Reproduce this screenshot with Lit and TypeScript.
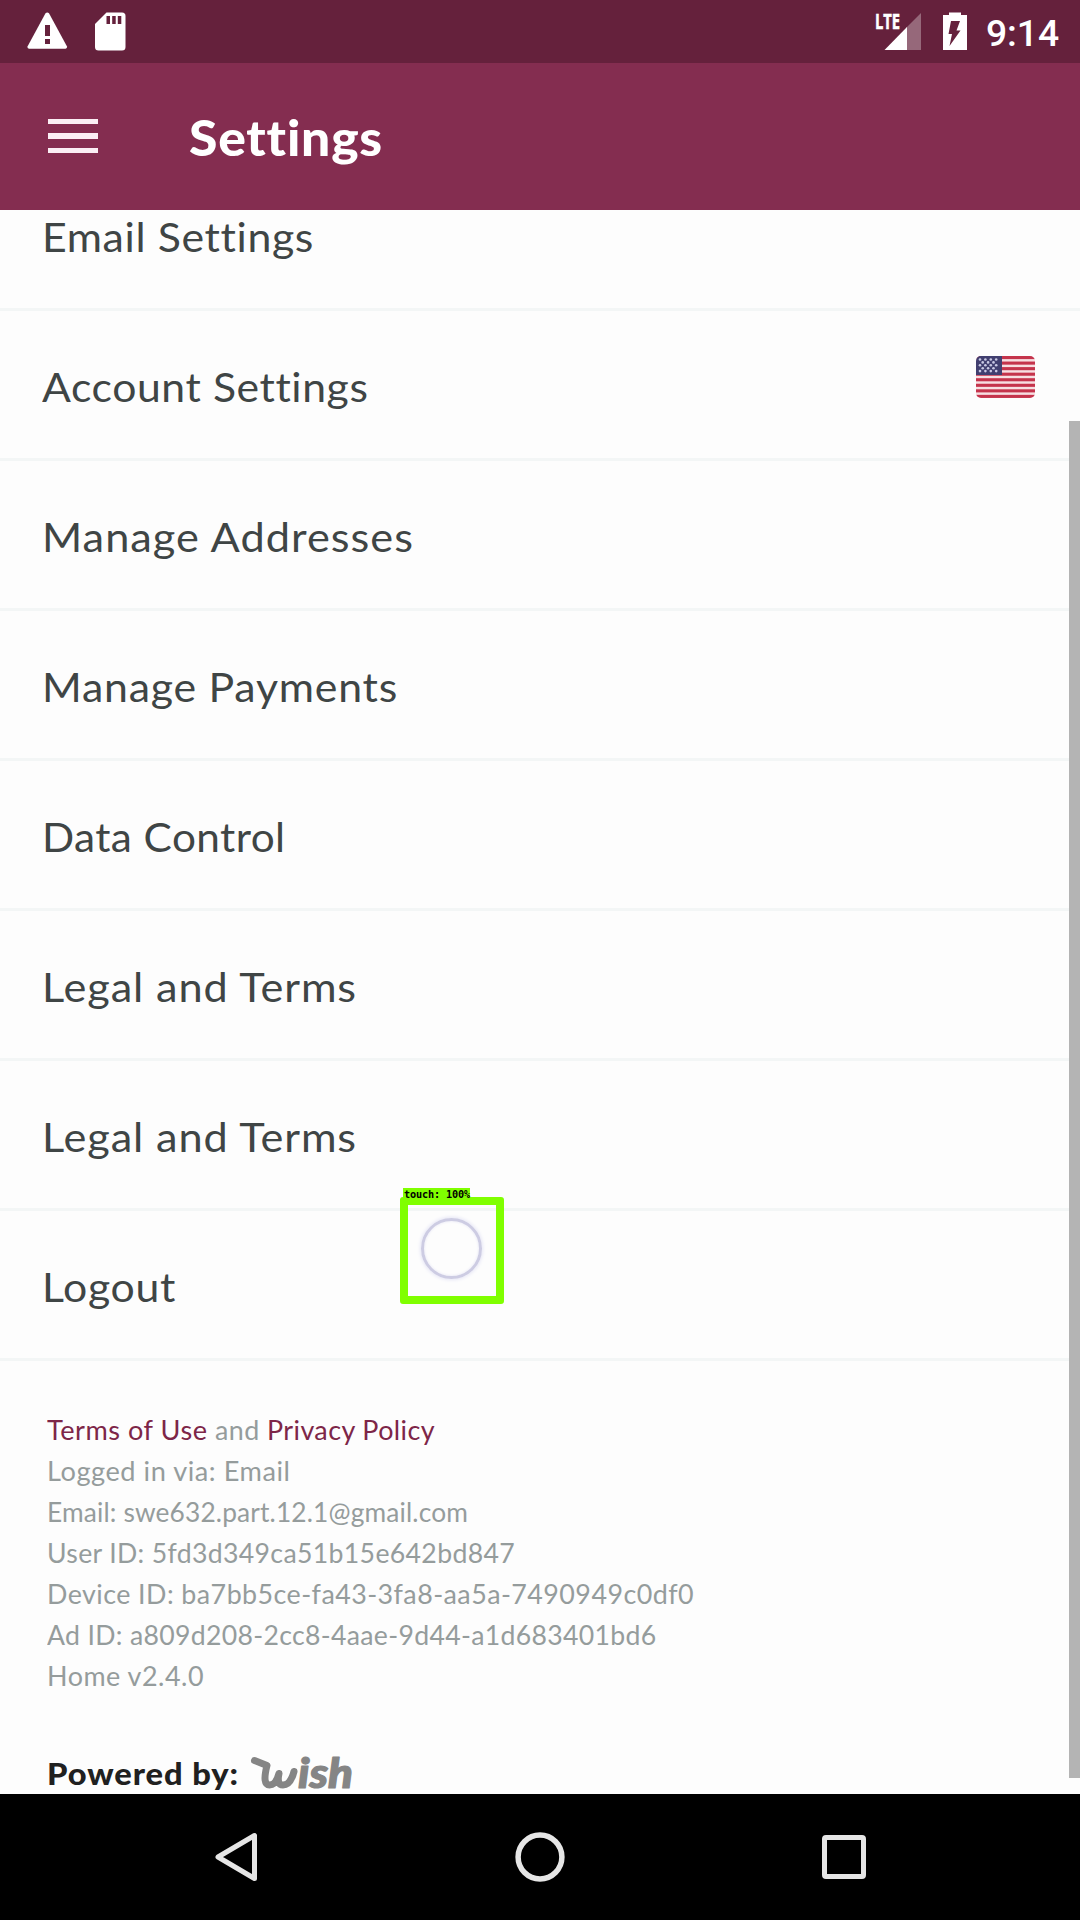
import { LitElement, html, css, svg } from "lit";
import { customElement, property } from "lit/decorators.js";

/** One line of text fitted to a set width, half by tracking and half by glyph width. */
@customElement("fit-text")
class FitText extends LitElement {
  @property({ type: Number }) span = 0;
  static styles = css`
    :host { display: inline-block; white-space: pre; font-variant-ligatures: none; }
    .run { display: inline-block; transform-origin: 0 50%; }
  `;
  render() {
    return html`<span class="run"><slot></slot></span>`;
  }
  async firstUpdated() {
    await document.fonts.ready;
    const run = this.renderRoot.querySelector(".run") as HTMLElement;
    const natural = run.getBoundingClientRect().width;
    const count = (this.textContent ?? "").length;
    if (natural && count && this.span) {
      const tracked = (natural + this.span) / 2;
      run.style.letterSpacing = `${(tracked - natural) / count}px`;
      run.style.transform = `scaleX(${this.span / tracked})`;
      this.style.width = `${this.span}px`;
    }
  }
}

@customElement("status-bar")
class StatusBar extends LitElement {
  static styles = css`
    :host {
      display: flex; align-items: center; height: 63px; box-sizing: border-box;
      padding: 0 21px 0 26px; background: #65213c; color: #fff;
      font-family: Roboto, sans-serif;
    }
    svg { display: block; flex: none; }
    .sd { margin-left: 25px; }
    .signal { margin-left: auto; }
    .battery { margin-left: 20px; }
    .lte { font: 700 22px "Open Sans", Roboto, sans-serif; }
    .clock { margin-left: 18px; font-size: 37.5px; font-weight: 500; line-height: 63px; padding-top: 3px; }
  `;
  render() {
    return html`
      <svg width="43" height="63" viewBox="26 0 43 63">
        <path fill="#fff" d="M45.500 13.200q1.800-1.200 3.500 0L67 46.500q.4 2-1.500 2.200h-36.500q-2-.2-1.500-2.200z"/>
        <path fill="#65213c" d="M45 25h5v11h-5zM45 39h5v5h-5z"/>
      </svg>
      <svg class="sd" width="32" height="63" viewBox="94.500 0 32 63">
        <path fill="#fff" d="M107 12.500h15.500q3.500 0 3.500 3.500v31q0 3.500-3.500 3.500h-23.500q-3.500 0-3.500-3.500V24z"/>
        <path fill="#65213c" d="M107 16h3.500v8H107zM112.700 16h3.500v8h-3.500zM118.300 16h3.500v8h-3.500z"/>
      </svg>
      <svg class="signal" width="48" height="63" viewBox="874 0 48 63">
        <path fill="#fff" fill-opacity=".32" d="M921 13v37H906V28z"/>
        <path fill="#fff" d="M907 27v23H884.500z"/>
        <text class="lte" x="875" y="29" fill="#fff" stroke="#fff" stroke-width=".6" textLength="25" lengthAdjust="spacingAndGlyphs">LTE</text>
      </svg>
      <svg class="battery" width="26" height="63" viewBox="942 0 26 63">
        <path fill="#fff" d="M949 12.500h12V15h6v35h-24V15h6z"/>
        <path fill="#65213c" d="M951 21h9l-3.500 9.500h4L949.500 46l2.500-12h-3.500z"/>
      </svg>
      <fit-text class="clock" span="73">9:14</fit-text>
    `;
  }
}

@customElement("app-toolbar")
class AppToolbar extends LitElement {
  static styles = css`
    :host {
      display: flex; align-items: center; height: 147px; padding-left: 48px;
      box-sizing: border-box; background: #842d50; color: #fff;
      font: 900 50px/60px Lato, sans-serif;
    }
    .menu { display: flex; flex-direction: column; gap: 8.700px; width: 50px; margin-right: 90.5px; margin-top: -1px; }
    .bar { height: 5.700px; background: #fbeef4; }
    .title { padding-top: 1px; }
  `;
  render() {
    return html`
      <div class="menu"><div class="bar"></div><div class="bar"></div><div class="bar"></div></div>
      <fit-text class="title" span="194">Settings</fit-text>
    `;
  }
}

@customElement("us-flag")
class UsFlag extends LitElement {
  static styles = css`
    :host { display: block; }
    svg { display: block; border-radius: 5px; }
  `;
  render() {
    const stripes = [0, 1, 2, 3, 4, 5, 6, 7];
    const stars = [0, 1, 2, 3, 4].flatMap((r) =>
      (r % 2 ? [0, 1, 2] : [0, 1, 2, 3]).map((c) => ({ x: 4 + c * 5.4 + (r % 2 ? 2.7 : 0), y: 3.5 + r * 2.9 })));
    return html`<svg width="59" height="42" viewBox="0 0 59 42">
      <rect width="59" height="42" fill="#f7dfe2"/>
      ${stripes.map((i) => svg`<rect y=${i * 5.55} width="59" height="3.100" fill="#c5344c"/>`)}
      <rect width="26" height="19" fill="#413f70"/>
      ${stars.map((s) => svg`<circle cx=${s.x} cy=${s.y} r="1.300" fill="#c9c9e4"/>`)}
    </svg>`;
  }
}

@customElement("wish-logo")
class WishLogo extends LitElement {
  static styles = css`
    :host { display: block; }
    svg { display: block; overflow: visible; }
    .ish { font: italic 900 42px/1 Lato, sans-serif; }
  `;
  render() {
    return html`<svg width="106" height="36" viewBox="250 1755 106 36">
      <path fill="none" stroke="#858585" stroke-width="7" stroke-linecap="round" stroke-linejoin="round"
        d="M254.500 1760.500l12.500 5q-5 19.500 2.500 19.500q6.500 0 9.500-11.500q-2.500 11.500 4 11.500q7.500 0 11-13.500"/>
      <text class="ish" x="298" y="1788" fill="#858585" stroke="#858585" stroke-width="1.200" stroke-linejoin="round" textLength="55" lengthAdjust="spacingAndGlyphs">ish</text>
    </svg>`;
  }
}

@customElement("nav-bar")
class NavBar extends LitElement {
  static styles = css`
    :host { display: flex; justify-content: space-around; align-items: center; height: 126px;
      padding: 0 84px; box-sizing: border-box; background: #000; }
    svg { display: block; }
  `;
  render() {
    return html`
      <svg width="60" height="60" viewBox="0 0 60 60" fill="none" stroke="#e6e6e6" stroke-width="5" stroke-linejoin="round">
        <path d="M48.500 8.500v43L12 30z"/></svg>
      <svg width="60" height="60" viewBox="0 0 60 60" fill="none" stroke="#e6e6e6" stroke-width="5.500">
        <circle cx="30" cy="30" r="21.900"/></svg>
      <svg width="60" height="60" viewBox="0 0 60 60" fill="none" stroke="#e6e6e6" stroke-width="5">
        <rect x="10.500" y="10.500" width="39" height="39" rx="1.500"/></svg>
    `;
  }
}

interface Row { label: string; span: number; flag?: boolean; }

@customElement("app-root")
class AppRoot extends LitElement {
  static styles = css`
    :host {
      display: flex; flex-direction: column; position: relative; width: 1080px; height: 1920px;
      overflow: hidden; background: #fdfdfd; font-family: Lato, "Open Sans", sans-serif;
    }
    status-bar, app-toolbar, nav-bar { flex: none; z-index: 1; }
    .content { flex: 1; min-height: 0; overflow: hidden; }
    .list { margin-top: -49px; }
    .row {
      display: flex; justify-content: space-between; height: 150px; box-sizing: border-box;
      padding: 48px 45px 0 42px; border-bottom: 3px solid #f3f6f6;
      font-size: 41.5px; line-height: 54px; color: #3f4545;
    }
    .flag { margin-top: -3px; }
    .about { padding: 49px 0 0 47px; font-size: 26px; line-height: 41px; color: #959c9c; }
    .line { display: flex; }
    .link { color: #7d2648; }
    .powered { display: flex; align-items: flex-start; gap: 11px; margin-top: 53px; color: #202020;
      font-weight: 900; font-size: 31px; line-height: 44px; }
    .by { margin-top: 1px; }
    .logo { margin-top: 5px; }
    .scroll { position: absolute; right: 0; top: 421px; width: 11px; height: 1357px; background: #b4b4b4; }
    .touch { position: absolute; left: 400px; top: 1197px; width: 104px; height: 107px; }
    .box { position: absolute; left: 0; top: 0; width: 104px; height: 107px; box-sizing: border-box; border: 8px solid #80ff00; border-radius: 3px; }
    .ring { position: absolute; left: 21px; top: 21px; width: 61px; height: 61px; box-sizing: border-box;
      border: 3px solid #cdcce3; border-radius: 50%; box-shadow: 0 0 4px #d8d8f2, inset 0 0 3px #e4e4f5; }
    .tag { position: absolute; left: 3px; top: -9px; width: 67px; height: 14px; background: #80ff00; color: #000;
      font: 700 10.5px/13px "DejaVu Sans Mono", monospace; padding-left: 1px; box-sizing: border-box; }
  `;
  private rows: Row[] = [
    { label: "Email Settings", span: 272 },
    { label: "Account Settings", span: 326.5, flag: true },
    { label: "Manage Addresses", span: 372 },
    { label: "Manage Payments", span: 356 },
    { label: "Data Control", span: 243.5 },
    { label: "Legal and Terms", span: 315 },
    { label: "Legal and Terms", span: 315 },
    { label: "Logout", span: 134 },
  ];
  private details: Row[] = [
    { label: "Logged in via: Email", span: 243.5 },
    { label: "Email: swe632.part.12.1@gmail.com", span: 421 },
    { label: "User ID: 5fd3d349ca51b15e642bd847", span: 468 },
    { label: "Device ID: ba7bb5ce-fa43-3fa8-aa5a-7490949c0df0", span: 647 },
    { label: "Ad ID: a809d208-2cc8-4aae-9d44-a1d683401bd6", span: 609.5 },
    { label: "Home v2.4.0", span: 157 },
  ];
  render() {
    return html`
      <status-bar></status-bar>
      <app-toolbar></app-toolbar>
      <div class="content">
        <div class="list">
          ${this.rows.map((r) => html`<div class="row">
            <fit-text .span=${r.span}>${r.label}</fit-text>
            ${r.flag ? html`<us-flag class="flag"></us-flag>` : ""}
          </div>`)}
        </div>
        <div class="about">
          <div class="line">
            <fit-text class="link" span="168">Terms of Use </fit-text><fit-text span="52">and </fit-text><fit-text class="link" span="168">Privacy Policy</fit-text>
          </div>
          ${this.details.map((d) => html`<div class="line"><fit-text .span=${d.span}>${d.label}</fit-text></div>`)}
          <div class="powered">
            <fit-text class="by" span="192">Powered by:</fit-text>
            <wish-logo class="logo"></wish-logo>
          </div>
        </div>
      </div>
      <nav-bar></nav-bar>
      <div class="scroll"></div>
      <div class="touch">
        <div class="box"></div>
        <div class="ring"></div>
        <div class="tag"><fit-text span="66">touch: 100%</fit-text></div>
      </div>
    `;
  }
}
